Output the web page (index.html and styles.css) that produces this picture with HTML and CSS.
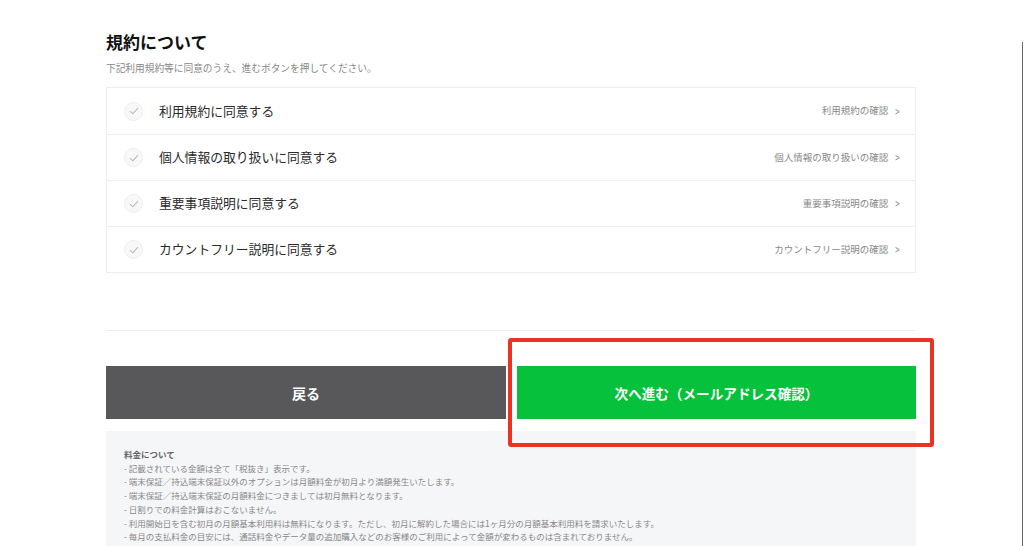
FILE: index.html
```html
<!DOCTYPE html>
<html lang="ja">
<head>
  <meta charset="UTF-8">
  <title>規約について</title>
  <meta name="viewport" content="width=device-width, initial-scale=1.0">
  <link rel="stylesheet" href="styles.css">
</head>
<body>
  <div id="page">
    <h2 class="title">規約について</h2>
    <p class="lead">下記利用規約等に同意のうえ、進むボタンを押してください。</p>

    <ul class="terms">
      <li>
        <span class="check"><svg width="10" height="8" viewBox="0 0 10 8"><path d="M1 4.2 L3.8 6.8 L9 1.2" fill="none" stroke="#b9b9b9" stroke-width="1.1"/></svg></span>
        <span class="label">利用規約に同意する</span>
        <a class="more">利用規約の確認<span class="chev">&gt;</span></a>
      </li>
      <li>
        <span class="check"><svg width="10" height="8" viewBox="0 0 10 8"><path d="M1 4.2 L3.8 6.8 L9 1.2" fill="none" stroke="#b9b9b9" stroke-width="1.1"/></svg></span>
        <span class="label">個人情報の取り扱いに同意する</span>
        <a class="more">個人情報の取り扱いの確認<span class="chev">&gt;</span></a>
      </li>
      <li>
        <span class="check"><svg width="10" height="8" viewBox="0 0 10 8"><path d="M1 4.2 L3.8 6.8 L9 1.2" fill="none" stroke="#b9b9b9" stroke-width="1.1"/></svg></span>
        <span class="label">重要事項説明に同意する</span>
        <a class="more">重要事項説明の確認<span class="chev">&gt;</span></a>
      </li>
      <li>
        <span class="check"><svg width="10" height="8" viewBox="0 0 10 8"><path d="M1 4.2 L3.8 6.8 L9 1.2" fill="none" stroke="#b9b9b9" stroke-width="1.1"/></svg></span>
        <span class="label">カウントフリー説明に同意する</span>
        <a class="more">カウントフリー説明の確認<span class="chev">&gt;</span></a>
      </li>
    </ul>

    <hr class="divider">

    <div class="actions">
      <button class="btn back">戻る</button>
      <button class="btn next">次へ進む（メールアドレス確認）</button>
      <div class="highlight"></div>
    </div>

    <div class="notes">
      <p class="notes-title">料金について</p>
      <p>- 記載されている金額は全て「税抜き」表示です。</p>
      <p>- 端末保証／持込端末保証以外のオプションは月額料金が初月より満額発生いたします。</p>
      <p>- 端末保証／持込端末保証の月額料金につきましては初月無料となります。</p>
      <p>- 日割りでの料金計算はおこないません。</p>
      <p>- 利用開始日を含む初月の月額基本利用料は無料になります。ただし、初月に解約した場合には1ヶ月分の月額基本利用料を請求いたします。</p>
      <p>- 毎月の支払料金の目安には、通話料金やデータ量の追加購入などのお客様のご利用によって金額が変わるものは含まれておりません。</p>
    </div>
  </div>
  <div class="edge"></div>
</body>
</html>
```
FILE: styles.css
```css
body {
  margin: 0;
  padding: 0;
  background-color: #fff;
  font-family: "Noto Sans CJK JP", "Noto Sans", sans-serif;
  color: #222;
  overflow: hidden;
  height: 546px;
}

#page {
  width: 810px;
  margin-left: 106px;
  padding-top: 30px;
}

.title {
  margin: 0;
  font-size: 17px;
  line-height: 24px;
  font-weight: bold;
  color: #111;
}

.lead {
  margin: 7px 0 0;
  font-size: 9.7px;
  line-height: 14px;
  color: #888;
}

.terms {
  list-style: none;
  margin: 12px 0 0;
  padding: 0;
  border: 1px solid #eeeeee;
}

.terms li {
  display: flex;
  align-items: center;
  height: 43px;
  padding: 0 14px 2px 17px;
  border-top: 1px solid #eeeeee;
}

.terms li:first-child {
  border-top: none;
  height: 44px;
}

.check {
  width: 19px;
  height: 19px;
  border-radius: 50%;
  background-color: #f8f8f8;
  border: 1px solid #efefef;
  display: flex;
  justify-content: center;
  align-items: center;
  margin-right: 16px;
  margin-top: 2px;
  box-sizing: border-box;
}

.label {
  font-size: 12.8px;
  color: #2a2a2a;
  flex: 1;
}

.more {
  font-size: 9.5px;
  color: #888;
  display: flex;
  align-items: center;
}

.chev {
  margin-left: 6px;
  font-size: 12px;
  color: #888;
  transform: scaleX(0.65);
}

.divider {
  margin: 57px 0 0;
  border: none;
  border-top: 1px solid #eeeeee;
  height: 0;
}

.actions {
  position: relative;
  display: flex;
  gap: 11px;
  margin-top: 35px;
}

.btn {
  height: 53px;
  border: none;
  font-family: inherit;
  font-weight: bold;
  color: #fff;
  cursor: pointer;
}

.back {
  width: 400px;
  background-color: #58585a;
  font-size: 14px;
}

.next {
  width: 399px;
  background-color: #06c13b;
  font-size: 13.6px;
}

.highlight {
  position: absolute;
  top: -28px;
  left: 402px;
  width: 426px;
  height: 109px;
  border: 4px solid #ea3323;
  border-radius: 3px;
  box-sizing: border-box;
  pointer-events: none;
}

.notes {
  margin-top: 12px;
  background-color: #f5f6f8;
  padding: 17px 18px 20px;
  color: #888;
  font-size: 8.5px;
  line-height: 13.7px;
}

.notes p {
  margin: 0;
}

.notes .notes-title {
  font-weight: bold;
  color: #666;
}

.edge {
  position: fixed;
  top: 42px;
  right: 1px;
  width: 1px;
  bottom: 0;
  background-color: #666;
}
```
